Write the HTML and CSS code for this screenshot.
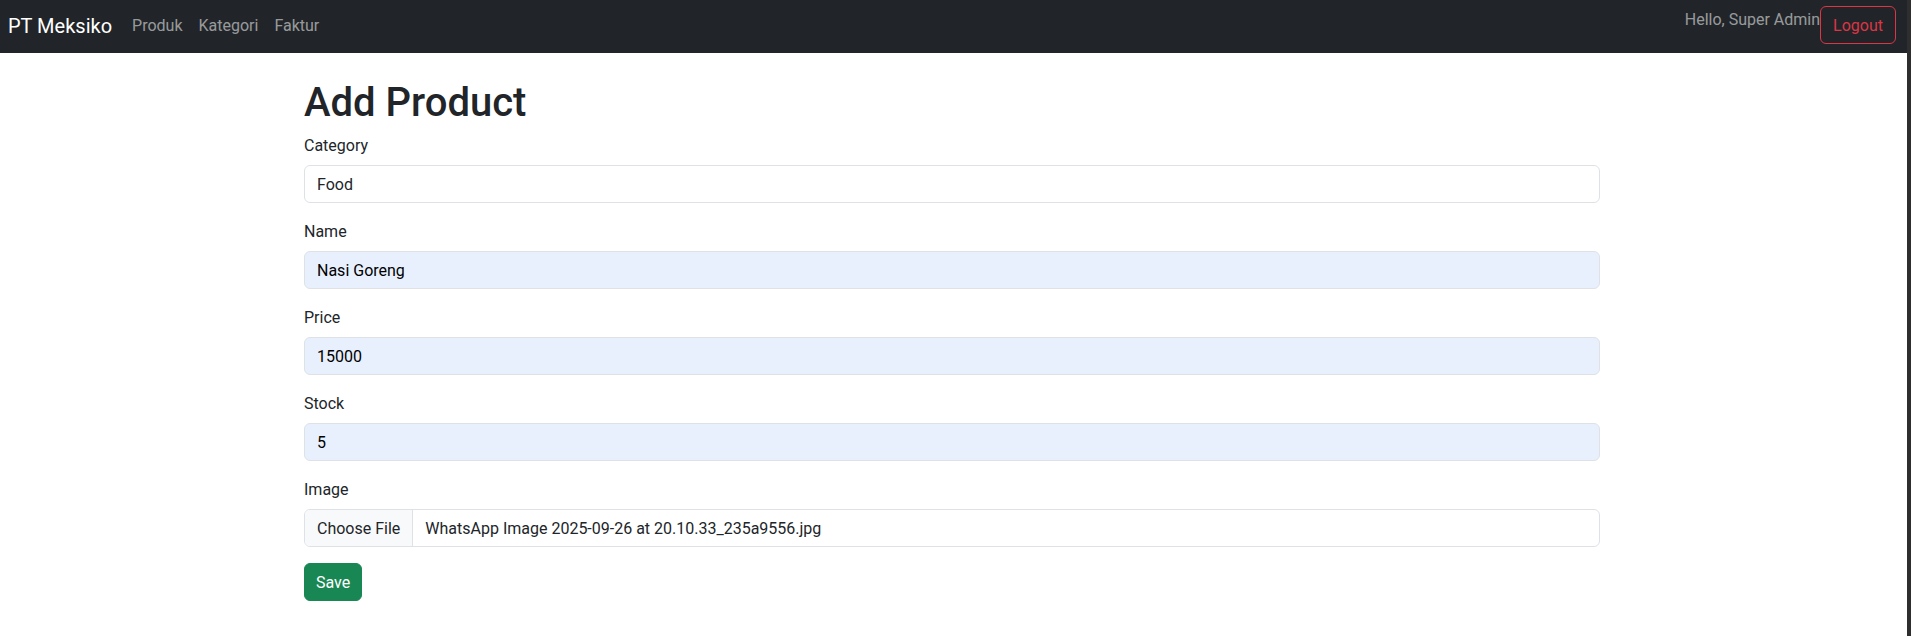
FILE: index.html
```html
<!DOCTYPE html>
<html lang="id">
<head>
<meta charset="utf-8">
<title>Add Product</title>
<link rel="stylesheet" href="styles.css">
</head>
<body>
<div class="window">
  <div class="page">
    <nav class="navbar">
      <a class="brand" href="#">PT Meksiko</a>
      <ul class="nav-links">
        <li><a class="nav-link" href="#">Produk</a></li>
        <li><a class="nav-link" href="#">Kategori</a></li>
        <li><a class="nav-link" href="#">Faktur</a></li>
      </ul>
      <div class="nav-right">
        <span class="hello">Hello, Super Admin</span>
        <button class="btn btn-outline-danger" type="button">Logout</button>
      </div>
    </nav>
    <main class="main">
      <div class="container">
        <h1 class="title">Add Product</h1>
        <form class="form">
          <div class="group">
            <label class="label">Category</label>
            <div class="control">Food</div>
          </div>
          <div class="group">
            <label class="label">Name</label>
            <div class="control autofill">Nasi Goreng</div>
          </div>
          <div class="group">
            <label class="label">Price</label>
            <div class="control autofill">15000</div>
          </div>
          <div class="group">
            <label class="label">Stock</label>
            <div class="control autofill">5</div>
          </div>
          <div class="group">
            <label class="label">Image</label>
            <div class="control file">
              <span class="file-btn">Choose File</span>
              <span class="file-name">WhatsApp Image 2025-09-26 at 20.10.33_235a9556.jpg</span>
            </div>
          </div>
          <button class="btn btn-success" type="button">Save</button>
        </form>
      </div>
    </main>
  </div>
  <div class="edge"></div>
</div>
</body>
</html>
```

FILE: styles.css
```css
* { box-sizing: border-box; }

html, body {
  margin: 0;
  padding: 0;
  height: 100%;
}

body {
  font-family: Roboto, "Liberation Sans", sans-serif;
  font-size: 16px;
  line-height: 24px;
  color: #212529;
  background: #ffffff;
}

.window {
  display: flex;
  min-height: 100%;
}

.page {
  flex: 1;
  min-width: 0;
}

.edge {
  width: 4px;
  flex: none;
  background: #2e2e2e;
}

/* Navbar */
.navbar {
  display: flex;
  align-items: flex-start;
  height: 53px;
  padding: 6px 11px 0 8px;
  background: #212529;
}

.brand {
  margin-top: 5px;
  margin-right: 12px;
  font-size: 20px;
  line-height: 30px;
  color: #ffffff;
  text-decoration: none;
  white-space: nowrap;
}

.nav-links {
  display: flex;
  list-style: none;
  margin: 0;
  padding: 0;
}

.nav-link {
  display: block;
  padding: 8px 8px;
  color: rgba(255, 255, 255, 0.55);
  text-decoration: none;
}

.nav-right {
  display: flex;
  align-items: flex-start;
  margin-left: auto;
}

.hello {
  line-height: 27px;
  color: rgba(255, 255, 255, 0.55);
  white-space: nowrap;
}

/* Buttons */
.btn {
  display: inline-block;
  padding: 6px 12px;
  font-family: inherit;
  font-size: 16px;
  line-height: 24px;
  border: 1px solid transparent;
  border-radius: 6px;
  background: transparent;
  cursor: pointer;
}

.btn-outline-danger {
  padding: 7px 12px 5px;
  color: #dc3545;
  border-color: #dc3545;
}

.btn-success {
  padding: 7px 11px 5px;
  color: #ffffff;
  background: #198754;
  border-color: #198754;
}

/* Main */
.main {
  padding: 24px 3px 0 0;
}

.container {
  max-width: 1320px;
  margin: 0 auto;
  padding: 0 12px;
}

.title {
  margin: 0 0 6px;
  padding-top: 2px;
  font-size: 40px;
  font-weight: 500;
  line-height: 48px;
}

.group {
  margin-bottom: 16px;
}

.label {
  display: block;
  padding-top: 1px;
  margin-bottom: 7px;
}

.control {
  height: 38px;
  padding: 7px 12px 5px;
  border: 1px solid #dee2e6;
  border-radius: 6px;
  background: #ffffff;
  color: #212529;
  white-space: nowrap;
}

.control.autofill {
  background: #e8f0fe;
  color: #000000;
}

.control.file {
  display: flex;
  padding: 0;
  overflow: hidden;
}

.file-btn {
  padding: 7px 12px 5px;
  background: #f8f9fa;
  border-right: 1px solid #dee2e6;
}

.file-name {
  padding: 7px 12px 5px;
}
```
